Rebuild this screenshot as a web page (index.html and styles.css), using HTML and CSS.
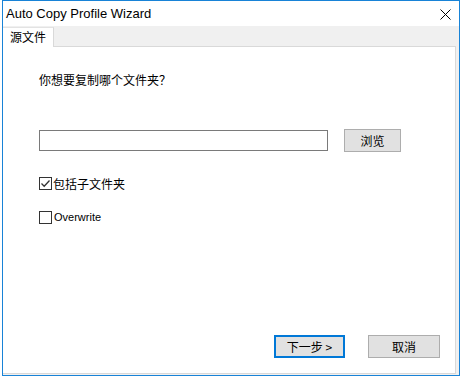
FILE: index.html
```html
<!DOCTYPE html>
<html>
<head>
<meta charset="utf-8">
<link rel="stylesheet" href="styles.css">
</head>
<body>
<div class="window">
  <div class="titlebar">
    <span class="title">Auto Copy Profile Wizard</span>
    <svg class="close" width="11" height="11" viewBox="0 0 11 11"><path d="M0.5 0.5 L10.5 10.5 M10.5 0.5 L0.5 10.5" stroke="#000" stroke-width="1" fill="none"/></svg>
  </div>
  <div class="client">
    <div class="tabs"><div class="tab">源文件</div></div>
    <div class="panel">
      <div class="question">你想要复制哪个文件夹？</div>
      <div class="path-row">
        <input class="path" type="text">
        <button class="btn browse">浏览</button>
      </div>
      <label class="check first">
        <span class="box"><svg width="11" height="11" viewBox="0 0 11 11"><path d="M1.5 5.5 L4.2 8.2 L9.5 2.5" stroke="#333" stroke-width="1.3" fill="none"/></svg></span>
        <span class="cn">包括子文件夹</span>
      </label>
      <label class="check second">
        <span class="box"></span>
        <span class="en">Overwrite</span>
      </label>
      <div class="actions">
        <button class="btn next">下一步 &gt;</button>
        <button class="btn cancel">取消</button>
      </div>
    </div>
  </div>
</div>
</body>
</html>
```
FILE: styles.css
```css
html, body {
  margin: 0;
  padding: 0;
  background: #fff;
}
body {
  width: 462px;
  height: 378px;
  overflow: hidden;
  font-family: "Noto Sans CJK SC", sans-serif;
  font-size: 12px;
  color: #000;
}
.window {
  margin-left: 2px;
  width: 458px;
  height: 376px;
  box-sizing: border-box;
  border: 1px solid #1883d7;
  display: flex;
  flex-direction: column;
}
.titlebar {
  height: 25px;
  flex: none;
  background: #fff;
  display: flex;
  align-items: center;
  justify-content: space-between;
  padding: 0 8px 0 3px;
}
.title {
  font-family: "Liberation Sans", sans-serif;
  font-size: 13px;
  color: #000;
}
.close {
  display: block;
  margin-top: 1px;
}
.client {
  flex: 1;
  background: #f0f0f0;
  display: flex;
  flex-direction: column;
}
.tabs {
  height: 20px;
  flex: none;
  display: flex;
  align-items: flex-start;
}
.tab {
  position: relative;
  z-index: 1;
  margin-top: 1px;
  width: 51px;
  height: 20px;
  box-sizing: border-box;
  background: #fff;
  border-top: 1px solid #e3e3e3;
  border-right: 1px solid #d9d9d9;
  text-align: center;
  line-height: 18px;
  font-size: 12px;
}
.panel {
  width: 453px;
  height: 328px;
  box-sizing: border-box;
  background: #fff;
  border-top: 1px solid #d9d9d9;
  border-right: 1px solid #d9d9d9;
  border-bottom: 1px solid #d9d9d9;
  padding: 25px 15px 15px 36px;
  display: flex;
  flex-direction: column;
}
.question {
  line-height: 16px;
  font-size: 12px;
}
.path-row {
  margin-top: 41px;
  height: 23px;
  display: flex;
  align-items: center;
}
.path {
  width: 289px;
  height: 21px;
  box-sizing: border-box;
  border: 1px solid #7a7a7a;
  background: #fff;
  margin: 0;
  padding: 0 2px;
  outline: none;
}
.btn {
  box-sizing: border-box;
  background: #e1e1e1;
  border: 1px solid #adadad;
  margin: 0;
  padding: 0;
  font-family: "Noto Sans CJK SC", sans-serif;
  font-size: 12px;
  color: #000;
  line-height: 16px;
}
.browse {
  margin-left: 16px;
  width: 57px;
  height: 23px;
}
.check {
  display: flex;
  align-items: center;
  height: 17px;
  line-height: 17px;
}
.check.first {
  margin-top: 23px;
}
.check.second {
  margin-top: 17px;
}
.box {
  width: 13px;
  height: 13px;
  box-sizing: border-box;
  border: 1px solid #333;
  background: #fff;
  display: flex;
  align-items: center;
  justify-content: center;
  flex: none;
}
.box svg {
  display: block;
}
.cn {
  margin-left: 1px;
  font-size: 12px;
}
.en {
  margin-left: 2px;
  font-family: "Liberation Sans", sans-serif;
  font-size: 11px;
}
.actions {
  margin-top: auto;
  display: flex;
  justify-content: flex-end;
  gap: 23px;
}
.next {
  width: 71px;
  height: 23px;
  border: 2px solid #0078d7;
}
.cancel {
  width: 72px;
  height: 23px;
}
```
